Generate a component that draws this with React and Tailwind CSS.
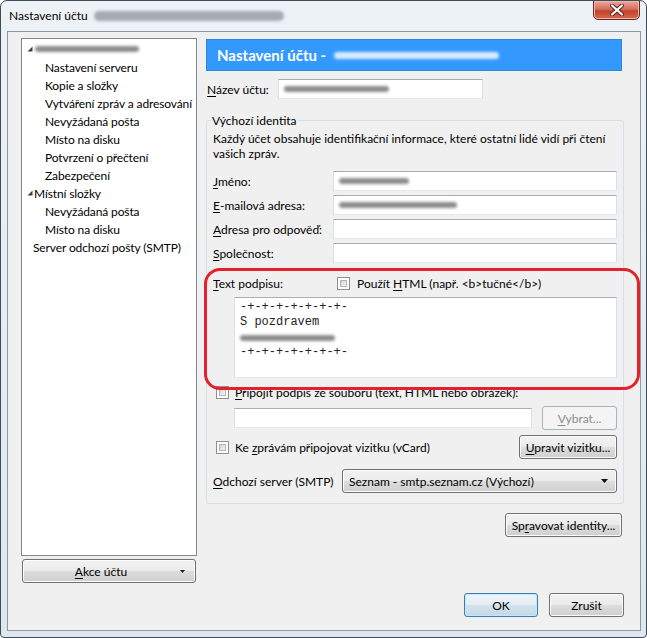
import React from "react";

const U = ({ children }) => (
  <span className="underline decoration-1 underline-offset-[2px]">{children}</span>
);

const Blur = ({ w, className = "bg-[#7d7d7d]" }) => (
  <span
    className={`inline-block h-[6px] rounded-full blur-[1.5px] ${className}`}
    style={{ width: w }}
  />
);

const Check = () => (
  <span className="inline-block w-[13px] h-[13px] shrink-0 border border-[#8f8f8f] bg-white p-[2px]">
    <span className="block w-full h-full border border-[#b4b4b4] bg-[linear-gradient(135deg,#d4d4d4,#f6f6f6)]" />
  </span>
);

const Btn = ({ children, className = "", disabled = false }) => (
  <div
    className={`flex items-center justify-center h-[24px] rounded-[3px] border shrink-0 ${
      disabled
        ? "border-[#adb2b5] bg-[#f4f4f4] text-[#8b8b8b]"
        : "border-[#707070] bg-[linear-gradient(to_bottom,#f2f2f2_0%,#ebebeb_50%,#dddddd_50%,#cfcfcf_100%)] shadow-[inset_0_0_0_1px_#fcfcfc]"
    } ${className}`}
  >
    {children}
  </div>
);

const Input = ({ className = "", children }) => (
  <div
    className={`flex items-center h-[20px] bg-white border border-t-[#abadb3] border-x-[#dbdfe6] border-b-[#e3e9ef] px-[5px] ${className}`}
  >
    {children}
  </div>
);

const Arrow = () => (
  <svg width="6" height="6" viewBox="0 0 6 6" className="shrink-0">
    <polygon points="5.5,0.5 5.5,5.5 0.5,5.5" fill="#404040" />
  </svg>
);

const tree = [
  { label: null, top: true },
  { label: "Nastavení serveru" },
  { label: "Kopie a složky" },
  { label: "Vytváření zpráv a adresování" },
  { label: "Nevyžádaná pošta" },
  { label: "Místo na disku" },
  { label: "Potvrzení o přečtení" },
  { label: "Zabezpečení" },
  { label: "Místní složky", top: true },
  { label: "Nevyžádaná pošta" },
  { label: "Místo na disku" },
  { label: "Server odchozí pošty (SMTP)", root: true },
];

export default function App() {
  return (
    <div className="relative w-[647px] h-[638px] overflow-hidden rounded-t-[7px] rounded-b-[4px] border border-[#3f4b58] bg-[linear-gradient(to_bottom,#eef2f6,#dfe6ee)] font-['Lato','Noto_Sans',sans-serif] text-[12px] leading-[15px] text-black">
      {/* title bar */}
      <div className="flex items-start h-[30px]">
        <div className="flex items-center mt-[7px] ml-[8px] gap-[6px]">
          <span className="text-[12px]">Nastavení účtu</span>
          <Blur w="190px" className="bg-[#a3abb4] h-[10px]" />
        </div>
        <div className="ml-auto mr-[6px] -mt-[1px] flex items-center justify-center w-[47px] h-[20px] rounded-b-[5px] border border-[#6b2a21] bg-[linear-gradient(to_bottom,#e9a99b_0%,#d56f5c_45%,#c2422c_55%,#d66a4f_100%)] shadow-[inset_0_0_0_1px_#f0b8aa]">
          <svg width="14" height="12" viewBox="0 0 14 12">
            <path
              d="M2 1.5 L12 10.5 M12 1.5 L2 10.5"
              stroke="#5a2118"
              strokeWidth="4"
              strokeLinecap="round"
            />
            <path
              d="M2 1.5 L12 10.5 M12 1.5 L2 10.5"
              stroke="#ffffff"
              strokeWidth="2.2"
              strokeLinecap="round"
            />
          </svg>
        </div>
      </div>

      {/* client area */}
      <div className="ml-[6px] w-[634px] h-[600px] border border-[#8d99a7] bg-[#f0f0f0] flex flex-col pl-[13px] pr-[16px] pt-[6px]">
        <div className="flex">
          {/* left column */}
          <div className="flex flex-col w-[177px]">
            <div className="h-[518px] border border-[#828790] bg-white pt-[1px] tracking-[-0.12px]">
              {tree.map((t, i) => (
                <div
                  key={i}
                  className={`flex items-center h-[18px] whitespace-nowrap ${
                    t.top ? "pl-[5px]" : t.root ? "pl-[11px]" : "pl-[23px]"
                  }`}
                >
                  {t.top && <Arrow />}
                  {t.label ? (
                    <span className={t.top ? "ml-[1px]" : ""}>{t.label}</span>
                  ) : (
                    <Blur w="104px" className="bg-[#8c8c8c] ml-[2px]" />
                  )}
                </div>
              ))}
            </div>
            <Btn className="mt-[3px] ml-[1px] w-[174px] relative">
              <span className="pr-[16px]">
                <U>A</U>kce účtu
              </span>
              <svg
                width="5"
                height="3"
                viewBox="0 0 5 3"
                className="absolute right-[10px] top-[10px]"
              >
                <polygon points="0,0 5,0 2.5,3" fill="#222" />
              </svg>
            </Btn>
          </div>

          {/* right column */}
          <div className="ml-[9px] mt-[1px] w-[419px] flex flex-col">
            <div className="h-[32px] w-[416px] bg-[#3399ff] border border-[#2f86de] flex items-center pl-[10px] gap-[8px]">
              <span className="text-white font-bold text-[15px]">
                Nastavení účtu -
              </span>
              <Blur w="165px" className="bg-[#d8ecff] h-[7px]" />
            </div>

            <div className="flex items-center mt-[8px] h-[20px]">
              <span className="ml-[1px] w-[71px]">
                <U>N</U>ázev účtu:
              </span>
              <Input className="w-[205px]">
                <Blur w="105px" className="bg-[#8c8c8c]" />
              </Input>
            </div>

            {/* group box */}
            <div className="relative mt-[21px] border border-[#d5dfe5] rounded-[3px] pl-[6px] pr-[6px] pt-[10px] pb-[10px]">
              <span className="absolute -top-[8px] left-[4px] px-[1px] bg-[#f0f0f0]">
                Výchozí identita
              </span>
              <p>
                Každý účet obsahuje identifikační informace, které ostatní lidé
                vidí při čtení
                <br />
                vašich zpráv.
              </p>

              <div className="flex flex-col gap-[4px] mt-[10px]">
                <div className="flex items-center">
                  <span className="w-[120px]">
                    <U>J</U>méno:
                  </span>
                  <Input className="flex-1">
                    <Blur w="70px" className="bg-[#8c8c8c]" />
                  </Input>
                </div>
                <div className="flex items-center">
                  <span className="w-[120px]">
                    <U>E</U>-mailová adresa:
                  </span>
                  <Input className="flex-1">
                    <Blur w="118px" className="bg-[#8c8c8c]" />
                  </Input>
                </div>
                <div className="flex items-center">
                  <span className="w-[120px]">
                    <U>A</U>dresa pro odpověď:
                  </span>
                  <Input className="flex-1" />
                </div>
                <div className="flex items-center">
                  <span className="w-[120px]">
                    <U>S</U>polečnost:
                  </span>
                  <Input className="flex-1" />
                </div>
              </div>

              <div className="flex items-center h-[16px] mt-[12px]">
                <span className="w-[124px]">
                  <U>T</U>ext podpisu:
                </span>
                <Check />
                <span className="ml-[7px]">
                  Použít <U>H</U>TML (např. &lt;b&gt;tučné&lt;/b&gt;)
                </span>
              </div>

              <div className="ml-[21px] mt-[6px] h-[81px] bg-white border border-t-[#abadb3] border-x-[#dbdfe6] border-b-[#e3e9ef] pl-[5px] pt-[2px] font-['Liberation_Mono',monospace] text-[12px] leading-[15px] text-[#222]">
                <div>-+-+-+-+-+-+-+-</div>
                <div>S pozdravem</div>
                <div className="h-[15px] flex items-center">
                  <Blur w="95px" className="bg-[#8c8c8c]" />
                </div>
                <div>-+-+-+-+-+-+-+-</div>
              </div>

              <div className="flex items-center h-[16px] mt-[6px] ml-[3px]">
                <Check />
                <span className="ml-[6px]">
                  <U>P</U>řipojit podpis ze souboru (text, HTML nebo obrázek):
                </span>
              </div>

              <div className="flex items-center mt-[6px] ml-[21px] h-[24px]">
                <Input className="w-[298px]" />
                <Btn disabled className="ml-[10px] w-[75px]">
                  <span>
                    <U>V</U>ybrat...
                  </span>
                </Btn>
              </div>

              <div className="flex items-center mt-[5px] h-[24px] ml-[3px]">
                <Check />
                <span className="ml-[6px]">
                  Ke <U>z</U>právám připojovat vizitku (vCard)
                </span>
                <Btn className="ml-auto w-[98px]">
                  <span>
                    <U>U</U>pravit vizitku...
                  </span>
                </Btn>
              </div>

              <div className="flex items-center mt-[10px] h-[24px]">
                <span className="w-[129px]">
                  <U>O</U>dchozí server (SMTP)
                </span>
                <Btn className="flex-1 justify-start pl-[6px] pr-[8px]">
                  <span>Seznam - smtp.seznam.cz (Výchozí)</span>
                  <svg
                    width="7"
                    height="4"
                    viewBox="0 0 7 4"
                    className="ml-auto"
                  >
                    <polygon points="0,0 7,0 3.5,4" fill="#111" />
                  </svg>
                </Btn>
              </div>
            </div>

            <div className="flex justify-end mt-[9px] pr-[2px]">
              <Btn className="w-[117px]">
                <span>
                  Sp<U>r</U>avovat identity...
                </span>
              </Btn>
            </div>
          </div>
        </div>

        {/* dialog buttons */}
        <div className="flex justify-end gap-[11px] mt-[10px]">
          <Btn className="w-[74px] !border-[#3c7fb1] !bg-[linear-gradient(to_bottom,#eef5fa_0%,#e4edf4_50%,#d3e2ed_50%,#c6d8e6_100%)] !shadow-[inset_0_0_0_1px_#c4e8f8]">
            <span>OK</span>
          </Btn>
          <Btn className="w-[75px]">
            <span>Zrušit</span>
          </Btn>
        </div>
      </div>

      {/* red annotation */}
      <div className="absolute left-[203px] top-[267px] w-[436px] h-[122px] rounded-[16px] border-[3px] border-[#e3202b] pointer-events-none" />
    </div>
  );
}
